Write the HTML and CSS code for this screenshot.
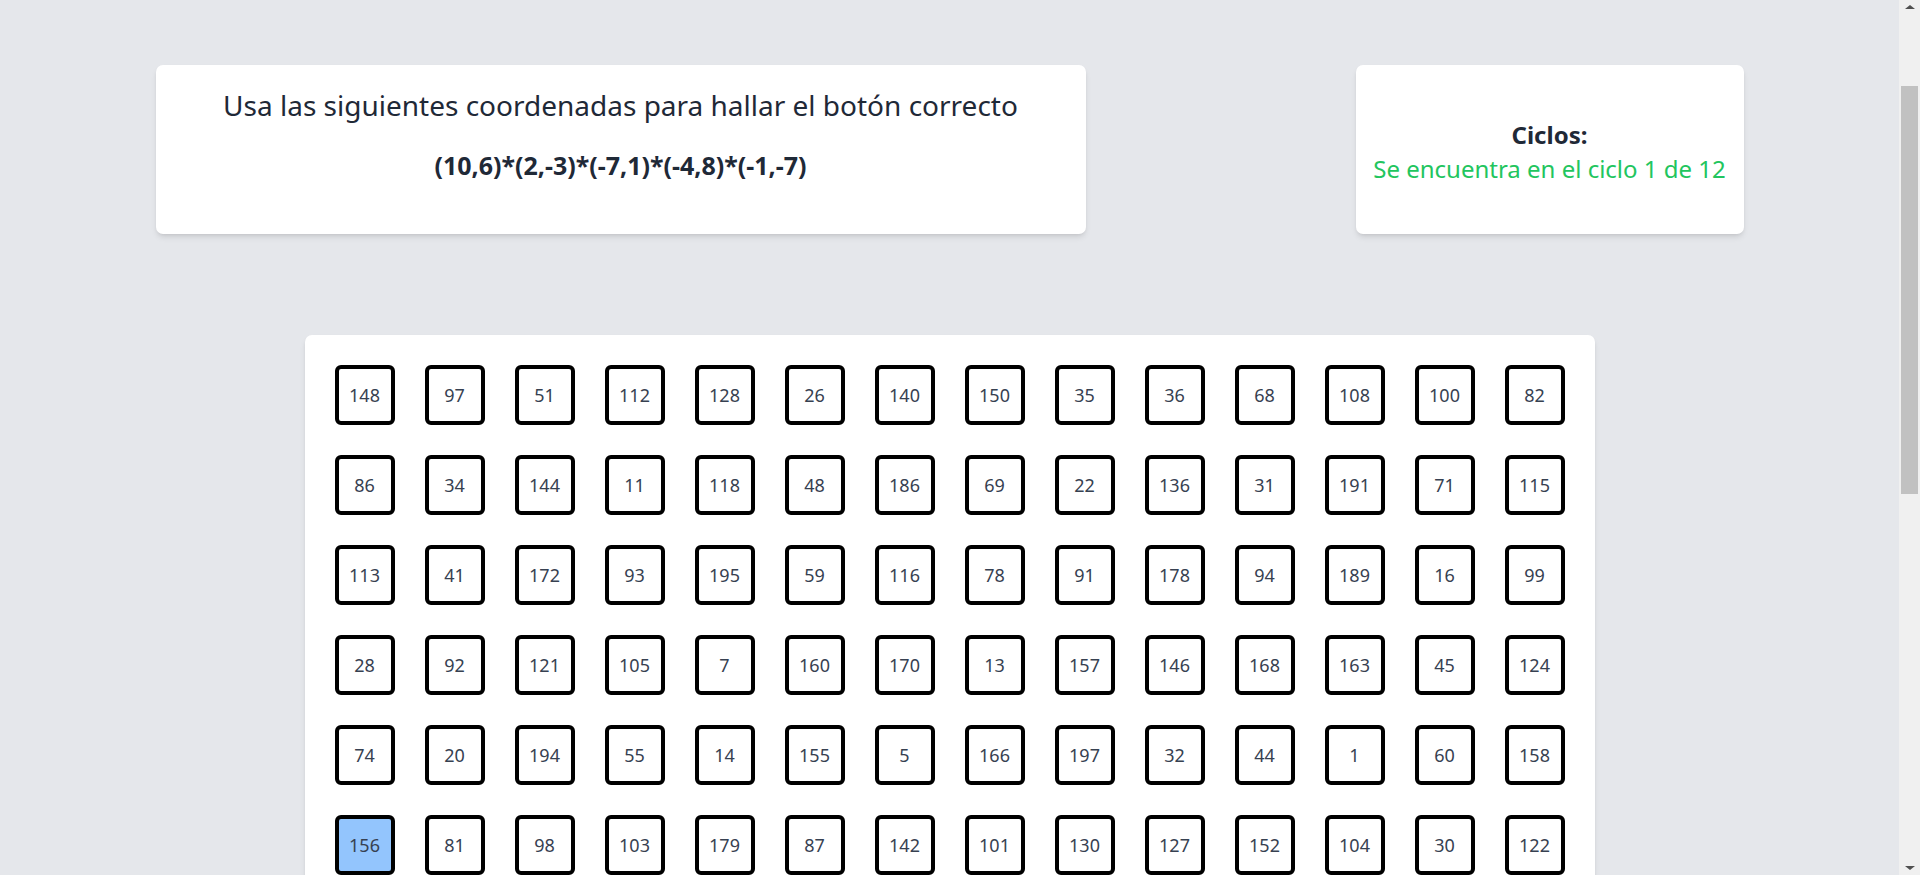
FILE: index.html
```html
<!DOCTYPE html>
<html lang="es">
<head>
<meta charset="utf-8">
<title>Coordenadas</title>
<link rel="stylesheet" href="styles.css">
</head>
<body>
<main class="page">
  <section class="top">
    <div class="card card-instructions">
      <h1 class="title">Usa las siguientes coordenadas para hallar el botón correcto</h1>
      <p class="coords">(10,6)*(2,-3)*(-7,1)*(-4,8)*(-1,-7)</p>
    </div>
    <div class="card card-cycles">
      <p class="cycles-label">Ciclos:</p>
      <p class="cycles-value">Se encuentra en el ciclo 1 de 12</p>
    </div>
  </section>
  <section class="card board">
    <button class="cell">148</button><button class="cell">97</button><button class="cell">51</button><button class="cell">112</button><button class="cell">128</button><button class="cell">26</button><button class="cell">140</button><button class="cell">150</button><button class="cell">35</button><button class="cell">36</button><button class="cell">68</button><button class="cell">108</button><button class="cell">100</button><button class="cell">82</button>
    <button class="cell">86</button><button class="cell">34</button><button class="cell">144</button><button class="cell">11</button><button class="cell">118</button><button class="cell">48</button><button class="cell">186</button><button class="cell">69</button><button class="cell">22</button><button class="cell">136</button><button class="cell">31</button><button class="cell">191</button><button class="cell">71</button><button class="cell">115</button>
    <button class="cell">113</button><button class="cell">41</button><button class="cell">172</button><button class="cell">93</button><button class="cell">195</button><button class="cell">59</button><button class="cell">116</button><button class="cell">78</button><button class="cell">91</button><button class="cell">178</button><button class="cell">94</button><button class="cell">189</button><button class="cell">16</button><button class="cell">99</button>
    <button class="cell">28</button><button class="cell">92</button><button class="cell">121</button><button class="cell">105</button><button class="cell">7</button><button class="cell">160</button><button class="cell">170</button><button class="cell">13</button><button class="cell">157</button><button class="cell">146</button><button class="cell">168</button><button class="cell">163</button><button class="cell">45</button><button class="cell">124</button>
    <button class="cell">74</button><button class="cell">20</button><button class="cell">194</button><button class="cell">55</button><button class="cell">14</button><button class="cell">155</button><button class="cell">5</button><button class="cell">166</button><button class="cell">197</button><button class="cell">32</button><button class="cell">44</button><button class="cell">1</button><button class="cell">60</button><button class="cell">158</button>
    <button class="cell cell-active">156</button><button class="cell">81</button><button class="cell">98</button><button class="cell">103</button><button class="cell">179</button><button class="cell">87</button><button class="cell">142</button><button class="cell">101</button><button class="cell">130</button><button class="cell">127</button><button class="cell">152</button><button class="cell">104</button><button class="cell">30</button><button class="cell">122</button>
  </section>
</main>
<div class="scrollbar" aria-hidden="true">
  <span class="scroll-arrow scroll-up"></span>
  <span class="scroll-track"><span class="scroll-thumb"></span></span>
  <span class="scroll-arrow scroll-down"></span>
</div>
</body>
</html>
```

FILE: styles.css
```css
html, body {
  margin: 0;
  padding: 0;
}

body {
  background: #e5e7eb;
  font-family: "Noto Sans", "Open Sans", sans-serif;
  color: #1f2937;
  padding-right: 21px;
}

.page {
  display: flex;
  flex-direction: column;
  align-items: center;
  padding: 65px 0 30px;
}

.top {
  width: 1588px;
  display: flex;
  justify-content: space-between;
  align-items: stretch;
}

.card {
  background: #ffffff;
  border-radius: 7px;
  box-shadow: 0 4px 6px -1px rgba(0, 0, 0, 0.1), 0 2px 4px -2px rgba(0, 0, 0, 0.1);
}

.card-instructions {
  width: 930px;
  box-sizing: border-box;
  padding: 24px 20px 55px;
  text-align: center;
}

.title {
  margin: 0;
  font-size: 28px;
  font-weight: 400;
  line-height: 32px;
  color: #1f2937;
}

.coords {
  margin: 30px 0 0;
  font-size: 25px;
  font-weight: 700;
  line-height: 28px;
  color: #1f2937;
}

.card-cycles {
  width: 388px;
  box-sizing: border-box;
  padding-top: 5px;
  display: flex;
  flex-direction: column;
  justify-content: center;
  align-items: center;
  gap: 2px;
  text-align: center;
}

.cycles-label {
  margin: 0;
  font-size: 24px;
  font-weight: 700;
  line-height: 32px;
  color: #1f2937;
}

.cycles-value {
  margin: 0;
  font-size: 24px;
  line-height: 32px;
  color: #22c55e;
}

.board {
  margin-top: 101px;
  padding: 30px;
  display: grid;
  grid-template-columns: repeat(14, 60px);
  grid-auto-rows: 60px;
  gap: 30px;
  border-radius: 7px;
}

.cell {
  width: 60px;
  height: 60px;
  box-sizing: border-box;
  border: 4px solid #000000;
  border-radius: 6px;
  background: #ffffff;
  font-family: "Noto Sans", "Open Sans", sans-serif;
  font-size: 18px;
  color: #374151;
  padding: 0;
  cursor: pointer;
}

.cell-active {
  background: #93c5fd;
}

.scrollbar {
  position: fixed;
  top: 0;
  right: 0;
  width: 21px;
  height: 100vh;
  background: #f0f0f0;
  display: flex;
  flex-direction: column;
  align-items: center;
}

.scroll-arrow {
  width: 0;
  height: 0;
  border-left: 5px solid transparent;
  border-right: 5px solid transparent;
  flex: none;
}

.scroll-up {
  margin-top: 5px;
  border-bottom: 4px solid #505050;
}

.scroll-down {
  margin-bottom: 5px;
  border-top: 4px solid #505050;
}

.scroll-track {
  flex: 1;
  width: 100%;
  display: flex;
  flex-direction: column;
  align-items: center;
  padding-top: 77px;
  box-sizing: border-box;
}

.scroll-thumb {
  width: 17px;
  height: 408px;
  background: #c1c1c1;
}
```
